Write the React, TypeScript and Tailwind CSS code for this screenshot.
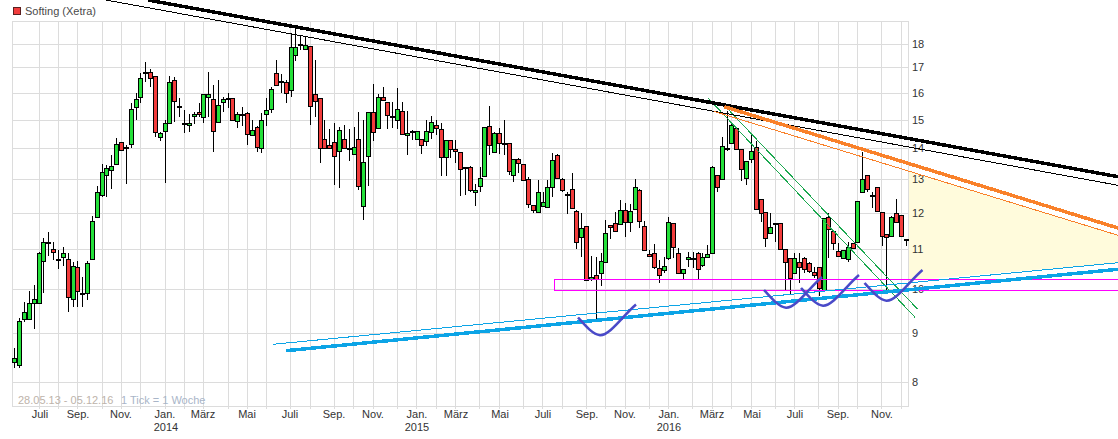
type Row = [number, number, number, number, number];

const group = (origin: number, rows: Row[]): Row[] =>
  rows.map(([a, b, c, d, e]) => [origin + a / 3, origin + b / 3, origin + c / 3, origin + d / 3, e]);

const candles: Row[] = [
  ...group(220, [
    [415, 427, 385, 443, 0], [302, 436, 295, 445, 0], [275, 298, 247, 305, 0], [248, 298, 213, 298, 0],
    [236, 250, 196, 326, 0], [100, 250, 95, 250, 0], [67, 124, 55, 218, 0], [65, 67, 37, 107, 2],
    [88, 95, 67, 119, 1], [116, 118, 91, 146, 2], [100, 112, 80, 137, 0], [116, 232, 100, 275, 1],
    [137, 238, 127, 260, 0], [140, 214, 124, 260, 1], [220, 223, 172, 260, 2], [128, 220, 124, 240, 0],
    [4, 118, -12, 118, 0],
  ]),
  ...group(0, [
    [575, 650, 558, 652, 0], [515, 584, 492, 592, 0], [503, 526, 495, 590, 0], [497, 511, 465, 566, 0],
    [431, 493, 415, 495, 0], [425, 451, 425, 451, 1], [440, 445, 435, 553, 0], [326, 433, 310, 445, 0],
    [298, 320, 280, 360, 0], [233, 292, 220, 310, 0], [217, 218, 187, 245, 2], [215, 235, 208, 260, 1],
    [227, 397, 227, 412, 1], [398, 412, 395, 422, 0], [368, 394, 360, 550, 0], [245, 370, 228, 370, 0],
    [239, 304, 232, 365, 1], [317, 319, 295, 350, 2], [368, 370, 330, 398, 2], [368, 376, 343, 395, 0],
    [341, 349, 337, 372, 0], [337, 343, 310, 350, 1], [281, 352, 281, 370, 0], [281, 292, 216, 350, 0],
    [296, 394, 255, 455, 1], [314, 367, 240, 367, 0], [296, 307, 292, 335, 0], [293, 295, 280, 325, 2],
    [293, 361, 293, 361, 1], [342, 364, 335, 385, 0], [341, 343, 322, 378, 2], [338, 401, 335, 435, 1],
    [389, 406, 360, 406, 0], [382, 442, 378, 455, 1], [361, 445, 338, 460, 0], [329, 343, 295, 378, 0],
    [268, 328, 260, 340, 0], [218, 256, 180, 256, 1], [242, 244, 222, 280, 2], [245, 280, 240, 308, 1],
    [142, 270, 98, 290, 0], [140, 166, 85, 182, 0], [133, 135, 107, 150, 2], [134, 148, 110, 150, 0],
    [137, 319, 137, 375, 1], [281, 304, 180, 350, 1], [293, 445, 293, 488, 1], [418, 445, 360, 445, 1],
    [436, 444, 388, 444, 1], [425, 469, 368, 555, 1], [389, 454, 382, 563, 0], [416, 445, 376, 445, 1],
    [445, 448, 388, 482, 2], [442, 463, 380, 463, 0], [416, 559, 335, 570, 1], [485, 617, 360, 660, 0],
    [335, 469, 335, 558, 0],
  ]),
  ...group(60, [
    [155, 215, 72, 242, 1], [112, 205, 102, 205, 0], [110, 121, 82, 121, 1], [125, 166, 125, 206, 1],
    [168, 170, 125, 205, 2], [148, 181, 85, 208, 0], [152, 223, 127, 226, 1], [218, 226, 152, 284, 0],
    [212, 214, 210, 240, 2], [214, 238, 212, 240, 0], [236, 256, 236, 281, 1], [212, 244, 180, 258, 0],
    [185, 216, 168, 236, 0], [196, 205, 180, 225, 1], [206, 292, 188, 347, 1], [241, 292, 241, 347, 0],
    [241, 268, 241, 295, 1], [266, 274, 240, 308, 1], [275, 328, 275, 407, 1], [322, 324, 322, 405, 2],
    [320, 389, 318, 395, 1], [391, 397, 373, 437, 0], [355, 379, 322, 395, 0], [202, 347, 200, 347, 0],
    [199, 256, 138, 284, 1], [218, 275, 215, 275, 0], [218, 250, 205, 283, 1], [250, 252, 180, 285, 2],
    [250, 334, 248, 345, 1], [298, 344, 298, 365, 0], [298, 310, 295, 340, 1], [313, 359, 313, 361, 1],
    [356, 433, 352, 445, 1], [436, 449, 435, 458, 1], [397, 457, 360, 458, 0], [427, 439, 395, 440, 0],
    [380, 440, 360, 440, 0], [301, 382, 280, 410, 0], [284, 355, 282, 355, 1], [358, 391, 355, 395, 1],
    [403, 405, 395, 462, 2], [386, 445, 340, 445, 1], [454, 547, 450, 568, 1], [503, 532, 458, 590, 0],
    [499, 660, 499, 660, 1], [652, 656, 588, 663, 0], [645, 656, 590, 776, 1], [604, 640, 580, 677, 0],
    [520, 605, 480, 605, 0], [496, 502, 494, 536, 1], [490, 512, 455, 515, 1], [449, 493, 420, 495, 0],
    [449, 485, 430, 530, 1], [452, 487, 432, 515, 0], [380, 448, 358, 448, 0], [389, 484, 387, 505, 1],
    [497, 569, 483, 570, 1], [581, 589, 570, 590, 1], [580, 620, 553, 627, 1], [623, 646, 600, 670, 1],
    [617, 631, 590, 640, 0], [485, 593, 470, 600, 0], [488, 562, 488, 595, 1], [580, 640, 565, 640, 1],
    [628, 640, 628, 657, 0], [592, 598, 575, 620, 0], [593, 595, 575, 623, 2], [580, 628, 577, 658, 1],
    [592, 616, 580, 620, 0], [581, 592, 555, 590, 0], [322, 580, 318, 580, 0], [346, 380, 345, 395, 1],
    [257, 358, 232, 358, 0], [264, 266, 153, 272, 2], [194, 250, 190, 250, 0],
  ]),
  ...group(90, [
    [115, 176, 110, 176, 1], [176, 238, 176, 272, 1], [214, 263, 214, 285, 0], [182, 206, 130, 220, 0],
    [172, 358, 152, 358, 1], [328, 370, 328, 395, 1], [367, 445, 367, 470, 1], [412, 428, 370, 428, 0],
    [398, 400, 398, 455, 2], [398, 476, 398, 476, 1],
  ]),
  ...group(220, [
    [88, 125, 88, 210, 1], [113, 175, 113, 225, 1], [115, 160, 100, 160, 0], [127, 142, 100, 190, 1],
    [115, 148, 112, 160, 1], [130, 154, 125, 158, 1], [157, 166, 140, 175, 1], [142, 205, 142, 228, 1],
  ]),
  ...group(90, [
    [385, 600, 385, 600, 0], [380, 418, 370, 505, 1], [424, 458, 424, 480, 1], [484, 499, 458, 499, 1],
    [479, 503, 479, 505, 0], [472, 508, 455, 515, 0], [458, 475, 458, 475, 1], [334, 457, 333, 457, 0],
    [266, 307, 185, 307, 0], [254, 298, 254, 305, 1], [315, 317, 305, 355, 2], [290, 364, 290, 364, 1],
    [367, 439, 367, 467, 1], [433, 441, 433, 600, 1], [380, 438, 378, 438, 0], [370, 396, 328, 398, 1],
    [376, 439, 376, 439, 1], [446, 451, 446, 467, 1],
  ]),
];

const bodyFill = ["#24e03a", "#f23c3c", "#000000"];

const gridX = [
  39, 58, 77, 102, 121, 140, 165, 184, 203, 228, 247, 266, 290, 310, 334, 353, 373, 397, 416, 436, 455, 479, 499,
  523, 542, 562, 586, 605, 625, 649, 668, 692, 712, 731, 751, 775, 794, 818, 838, 857, 881, 901,
];
const gridY = [44, 67, 93, 120, 148, 179, 213, 249, 289, 333, 382];

const priceLabels: [string, number][] = [
  ["18", 44], ["17", 67], ["16", 93], ["15", 120], ["14", 148], ["13", 179],
  ["12", 213], ["11", 249], ["10", 289], ["9", 333], ["8", 382],
];

const monthLabels: [string, number][] = [
  ["Juli", 40], ["Sep.", 78], ["Nov.", 121], ["Jan.", 165], ["März", 203], ["Mai", 247], ["Juli", 290],
  ["Sep.", 334], ["Nov.", 373], ["Jan.", 417], ["März", 456], ["Mai", 500], ["Juli", 543], ["Sep.", 587],
  ["Nov.", 625], ["Jan.", 669], ["März", 712], ["Mai", 752], ["Juli", 795], ["Sep.", 838], ["Nov.", 882],
];

const yearLabels: [string, number][] = [["2014", 166], ["2015", 417], ["2016", 669]];

const smiles: [number, number][] = [[578, 317.5], [764, 290], [801, 288], [864.5, 283]];

export default function App() {
  return (
    <div className="w-[1118px] h-[439px] overflow-hidden bg-white font-['Liberation_Sans',Arial,sans-serif]">
      <div className="h-[21px] flex items-start pt-[5px] pl-[13px] gap-[4px] text-[11px] leading-[13px] text-[#4a4a4a]">
        <span className="mt-[2px] w-[8px] h-[8px] bg-[#f23c3c] border border-[#5a2020]" />
        <span>Softing (Xetra)</span>
      </div>
      <svg width={1118} height={418} viewBox="0 21 1118 418" className="block overflow-visible">
        <polygon points="909,171.2 1118,235.3 1118,263 909,280.5" fill="#fffbdc" />

        <g stroke="#dcdcdc" strokeWidth={1} shapeRendering="crispEdges">
          <rect x={12.5} y={21.5} width={896} height={385} fill="none" />
          {gridY.map((y) => (
            <line key={y} x1={12} x2={909} y1={y + 0.5} y2={y + 0.5} />
          ))}
          {gridX.map((x) => (
            <line key={x} x1={x + 0.5} x2={x + 0.5} y1={21} y2={409} />
          ))}
        </g>

        <g fontSize={11} fill="#333333">
          {priceLabels.map(([t, y]) => (
            <text key={t} x={912} y={y + 4}>{t}</text>
          ))}
          {monthLabels.map(([t, x]) => (
            <text key={t + x} x={x} y={418} textAnchor="middle">{t}</text>
          ))}
          {yearLabels.map(([t, x]) => (
            <text key={t} x={x} y={431} textAnchor="middle">{t}</text>
          ))}
        </g>
        <text x={18} y={404} fontSize={11} fill="#bdb3aa">28.05.13 - 05.12.16</text>
        <text x={121} y={404} fontSize={11} fill="#a9b5c8">1 Tick = 1 Woche</text>

        <g shapeRendering="crispEdges">
          {candles.map(([top, bot, wt, wb, c], i) => {
            const p = Math.floor(14.9 + i * 4.845);
            const y0 = Math.round(top);
            const h = Math.max(Math.round(bot) - y0, 1);
            return (
              <g key={i}>
                <line x1={p + 0.5} x2={p + 0.5} y1={Math.round(wt)} y2={Math.round(wb)} stroke="#000" strokeWidth={1} />
                <rect x={p - 1.5} y={y0 + 0.5} width={4} height={h} fill={bodyFill[c]} stroke="#000" strokeWidth={1} />
              </g>
            );
          })}
        </g>

        <rect x={554.5} y={279.5} width={600} height={11} fill="none" stroke="#ff00ff" strokeWidth={1} shapeRendering="crispEdges" />

        <g shapeRendering="crispEdges">
          <line x1={708.3} y1={98.3} x2={915} y2={317.3} stroke="#1aa84f" strokeWidth={1} />
          <line x1={725} y1={106} x2={917.7} y2={309.3} stroke="#1aa84f" strokeWidth={1} />

          <line x1={106} y1={0} x2={1118} y2={185.3} stroke="#000" strokeWidth={1} />
          <line x1={148} y1={0} x2={1118} y2={176.7} stroke="#000" strokeWidth={3.5} />

          <line x1={714} y1={111.4} x2={1118} y2={235.3} stroke="#f9812a" strokeWidth={1} />
          <line x1={724.3} y1={106.7} x2={1118} y2={228} stroke="#f9812a" strokeWidth={3.5} />

          <line x1={273} y1={344.3} x2={1118} y2={262.7} stroke="#0ca4e6" strokeWidth={1} />
          <line x1={286} y1={350.7} x2={1118} y2={269.3} stroke="#0ca4e6" strokeWidth={3.5} />
        </g>

        {smiles.map(([x, y]) => (
          <path
            key={x}
            d={`M${x} ${y} C${x + 8} ${y + 9} ${x + 15} ${y + 17} ${x + 22} ${y + 17.7} C${x + 32} ${y + 18} ${x + 45} ${y - 2} ${x + 58} ${y - 13}`}
            fill="none"
            stroke="#4a4ac8"
            strokeWidth={2.5}
          />
        ))}
      </svg>
    </div>
  );
}
